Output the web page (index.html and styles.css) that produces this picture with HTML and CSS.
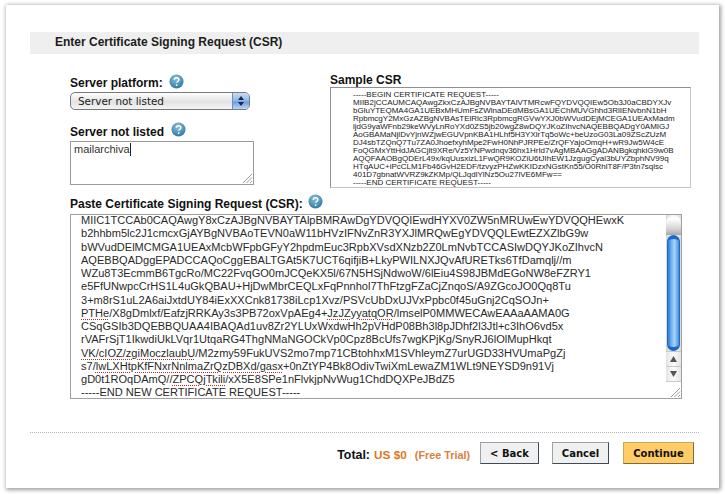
FILE: index.html
```html
<!DOCTYPE html>
<html lang="en">
<head>
<meta charset="utf-8">
<title>Enter Certificate Signing Request (CSR)</title>
<link rel="stylesheet" href="styles.css">
</head>
<body>
<svg class="sprite" width="0" height="0" aria-hidden="true">
  <defs>
    <radialGradient id="helpfill" cx="45%" cy="30%" r="75%">
      <stop offset="0" stop-color="#8fc0d8"/>
      <stop offset="0.6" stop-color="#4f94b8"/>
      <stop offset="1" stop-color="#2f7499"/>
    </radialGradient>
    <symbol id="help" viewBox="0 0 16 16">
      <circle cx="8" cy="8" r="7.5" fill="url(#helpfill)"/>
      <path d="M5.6 6.200C5.700 4.800 6.700 4 8.100 4c1.400 0 2.400.8 2.400 2 0 1-.6 1.500-1.300 2-.6.4-.9.7-.9 1.400" fill="none" stroke="#fff" stroke-width="1.600"/>
      <circle cx="8.200" cy="11.800" r="1" fill="#fff"/>
    </symbol>
  </defs>
</svg>
<main class="card">
  <h1 class="title">Enter Certificate Signing Request (CSR)</h1>
  <section class="columns">
    <div class="left">
      <label class="label label-platform"><span>Server platform:</span><svg class="help"><use href="#help"/></svg></label>
      <div class="select">
        <span class="select-value">Server not listed</span>
        <span class="select-arrows">
          <svg width="8" height="12" viewBox="0 0 8 12"><path d="M4 1 7 5H1zM4 11 1 7h6z" fill="#1a2a44"/></svg>
        </span>
      </div>
      <label class="label label-other"><span>Server not listed</span><svg class="help"><use href="#help"/></svg></label>
      <div class="input-small">mailarchiva<span class="caret"></span>
        <svg class="grip" width="11" height="11" viewBox="0 0 11 11"><path d="M1 10 10 1M4.500 10 10 4.500M8 10 10 8" stroke="#999" fill="none"/></svg>
      </div>
    </div>
    <div class="right">
      <h2 class="sample-title">Sample CSR</h2>
      <pre class="sample">-----BEGIN CERTIFICATE REQUEST-----
MIIB2jCCAUMCAQAwgZkxCzAJBgNVBAYTAlVTMRcwFQYDVQQIEw5Ob3J0aCBDYXJv
bGluYTEQMA4GA1UEBxMHUmFsZWlnaDEdMBsGA1UEChMUVGhhd3RlIENvbnN1bH
RpbmcgY2MxGzAZBgNVBAsTElRlc3RpbmcgRGVwYXJ0bWVudDEjMCEGA1UEAxMadm
ljdG9yaWFnb29keWVyLnRoYXd0ZS5jb20wgZ8wDQYJKoZIhvcNAQEBBQADgY0AMIGJ
AoGBAMaNjlDvYjnWZjwEGUVpnKBA1HLhf5H3YXlrTq5oWc+beUzoG03La09ZScZUzM
DJ4sbTZQnQ7Tu7ZA0JhoefxyhMpe2FwH0NhPJRPEe/ZrQFYajoOmqH+wR9Jw5W4cE
FoQGMxYttHdJAGCjlt9XRe/Vz5YNPwdnqv36hx1HrId7vAgMBAAGgADANBgkqhkiG9w0B
AQQFAAOBgQDErL49x/kqUusxizL1FwQR9KOZiU6tJIhEW1JzgugCyal3bUYZbphNV99q
HTqAUC+iPcCLM1Fb46GvH2EDF/tzvyzPHZwKKIDzxNGstKn55/O0RhlT8F/P3tn7sqlsc
401D7gbnatWVRZ9kZKMp/QLJqdlYlNz5Ou27lVE6MFw==
-----END CERTIFICATE REQUEST-----</pre>
    </div>
  </section>
  <label class="label label-paste"><span>Paste Certificate Signing Request (CSR):</span><svg class="help"><use href="#help"/></svg></label>
  <div class="paste">
    <pre class="paste-text">MIIC1TCCAb0CAQAwgY8xCzAJBgNVBAYTAlpBMRAwDgYDVQQIEwdHYXV0ZW5nMRUwEwYDVQQHEwxK
b2hhbm5lc2J1cmcxGjAYBgNVBAoTEVN0aW11bHVzIFNvZnR3YXJlMRQwEgYDVQQLEwtEZXZlbG9w
bWVudDElMCMGA1UEAxMcbWFpbGFyY2hpdmEuc3RpbXVsdXNzb2Z0LmNvbTCCASIwDQYJKoZIhvcN
AQEBBQADggEPADCCAQoCggEBALTGAt5K7UCT6qifjiB+LkyPWILNXJQvAfURETks6TfDamqlj//m
WZu8T3EcmmB6TgcRo/MC22FvqGO0mJCQeKX5l/67N5HSjNdwoW/6lEiu4S98JBMdEGoNW8eFZRY1
e5FfUNwpcCrHS1L4uGkQBAU+HjDwMbrCEQLxFqPnnhol7ThFtzgFZaCjZnqoS/A9ZGcoJO0Qq8Tu
3+m8rS1uL2A6aiJxtdUY84iExXXCnk81738iLcp1Xvz/PSVcUbDxUJVxPpbc0f45uGnj2CqSOJn+
<span class="sp">PTHe</span>/X8gDmlxf/EafzjRRKAy3s3PB72oxVpAEg4+<span class="sp">JzJZyyatqOR</span>/lmselP0MMWECAwEAAaAAMA0G
CSqGSIb3DQEBBQUAA4IBAQAd1uv8Zr2YLUxWxdwHh2pVHdP08Bh3l8pJDhf2l3Jtl+c3IhO6vd5x
rVAFrSjT1IkwdiUkLVqr1UtqaRG4ThgNMaNGOCkVp0Cpz8BcUfs7wgKPjKg/SnyRJ6lOlMupHkqt
<span class="sp">VK/cIOZ/zgiMoczlaubU</span>/M2zmy59FukUVS2mo7mp71CBtohhxM1SVhleymZ7urUGD33HVUmaPgZj
s7/<span class="sp">lwLXHtpKfFNxrNnlmaZrQzDBXd/gasx</span>+0nZtYP4Bk8OdivTwiXmLewaZM1WLt9NEYSD9n91Vj
gD0t1ROqDAmQ//<span class="sp">ZPCQjTkili</span>/xX5E8SPe1nFlvkjpNvWug1ChdDQXPeJBdZ5
-----END NEW CERTIFICATE REQUEST-----</pre>
    <div class="scrollbar">
      <div class="sb-cap"></div>
      <div class="sb-thumb"></div>
      <div class="sb-btn"><svg width="9" height="8" viewBox="0 0 9 8"><path d="M4.500 1 8 7H1z" fill="#555"/></svg></div>
      <div class="sb-btn"><svg width="9" height="8" viewBox="0 0 9 8"><path d="M4.500 7 1 1h7z" fill="#555"/></svg></div>
      <div class="sb-corner"><svg width="11" height="11" viewBox="0 0 11 11"><path d="M1 10 10 1M4.500 10 10 4.500M8 10 10 8" stroke="#999" fill="none"/></svg></div>
    </div>
  </div>
  <footer class="footer">
    <span class="total">Total:</span>
    <span class="price">US $0</span>
    <span class="trial">(Free Trial)</span>
    <button class="btn btn-back" type="button">&lt; Back</button>
    <button class="btn btn-cancel" type="button">Cancel</button>
    <button class="btn btn-primary" type="button">Continue</button>
  </footer>
</main>
</body>
</html>
```

FILE: styles.css
```css
* { box-sizing: border-box; }
html, body { margin: 0; padding: 0; background: #fff; }
body {
  width: 725px;
  height: 494px;
  overflow: hidden;
  padding: 5px 6px 6px;
  font-family: "Liberation Sans", Arial, sans-serif;
  color: #111;
}
.sprite { position: absolute; }
.card {
  width: 713px;
  height: 483px;
  background: #fff;
  box-shadow: 1px 1px 4px 1px rgba(0, 0, 0, 0.38);
  padding: 27px 20px 0 24px;
}
.title {
  margin: 0;
  height: 22px;
  background: #efefef;
  padding-left: 25px;
  font-size: 12px;
  line-height: 21px;
  font-weight: bold;
  color: #1c1c1c;
}
.columns {
  display: grid;
  grid-template-columns: 260px 361px;
  margin: 18px 0 0 40px;
  height: 116px;
}
.label {
  display: flex;
  align-items: flex-start;
  font-size: 12px;
  font-weight: bold;
  line-height: 14px;
  color: #111;
  white-space: nowrap;
}
.help {
  width: 15px;
  height: 15px;
  margin: -2px 0 0 6px;
  flex: none;
}
.label-platform { height: 20px; padding-top: 4px; }
.select {
  width: 180px;
  height: 18px;
  border: 1px solid #77797c;
  border-radius: 5px;
  background: linear-gradient(#fdfdfd, #e3e3e3 55%, #f4f4f4);
  display: flex;
  align-items: center;
  justify-content: space-between;
  overflow: hidden;
}
.select-value {
  padding-left: 7px;
  font-family: "Lucida Grande", "DejaVu Sans", sans-serif;
  font-size: 10.4px;
  color: #222;
}
.select-arrows {
  width: 17px;
  height: 16px;
  background: linear-gradient(#c8dcf5, #8db6ea 50%, #6a9de0 55%, #bcd6f5);
  border-left: 1px solid #6f8fbd;
  display: flex;
  align-items: center;
  justify-content: center;
}
.label-other { margin-top: 14px; height: 17px; padding-top: 1px; }
.label-other .help { margin-left: 7px; margin-top: -3px; }
.input-small {
  position: relative;
  width: 184px;
  height: 44px;
  border: 1px solid #9a9a9a;
  padding: 0 3px;
  font-size: 11px;
  line-height: 14px;
  color: #333;
  background: #fff;
}
.caret {
  display: inline-block;
  width: 1px;
  height: 13px;
  background: #222;
  vertical-align: -3px;
}
.grip { position: absolute; right: 0; bottom: 0; }
.sample-title {
  margin: 1px 0 0;
  font-size: 12px;
  line-height: 14px;
  height: 14px;
  font-weight: bold;
  color: #111;
}
.sample {
  margin: 0;
  width: 361px;
  height: 101px;
  border: 1px solid #c4c4c4;
  border-top-color: #8f8f8f;
  border-left-color: #8f8f8f;
  padding: 3px 0 0 22px;
  font-family: "Liberation Sans", Arial, sans-serif;
  font-size: 8px;
  line-height: 8px;
  color: #222;
  white-space: pre;
  overflow: hidden;
}
.label-paste { margin: 9px 0 0 40px; height: 17px; }
.label-paste .help { margin: -3px 0 0 5px; }
.paste {
  position: relative;
  margin-left: 40px;
  width: 612px;
  height: 185px;
  border: 1px solid #a0a0a0;
  background: #fff;
  overflow: hidden;
}
.paste-text {
  margin: -1px 0 0;
  padding-left: 10px;
  font-family: "Liberation Sans", Arial, sans-serif;
  font-size: 11.05px;
  line-height: 13.25px;
  color: #2a2a2a;
  white-space: pre;
}
.sp {
  text-decoration: underline dotted #b03030;
  text-underline-offset: 2px;
}
.scrollbar {
  position: absolute;
  top: 0;
  right: 0;
  width: 15px;
  height: 183px;
  background: linear-gradient(90deg, #d6d6d6, #f6f6f6 50%, #dcdcdc);
  display: flex;
  flex-direction: column;
}
.sb-cap {
  height: 20px;
  background: linear-gradient(#f3f3f3, #fff 20%, #d3d3d3 70%, #a8a8a8);
  border-radius: 8px 8px 0 0;
}
.sb-thumb {
  height: 116px;
  margin: 0 1px;
  border-radius: 7px;
  border: 1px solid #1f69c0;
  border-top: 4px solid #1a68c8;
  border-bottom: 4px solid #1a68c8;
  background: linear-gradient(90deg, #2a7ad8, #7ab8f2 35%, #a8d4fa 60%, #3f8fe0);
}
.sb-btn {
  height: 15px;
  display: flex;
  align-items: center;
  justify-content: center;
  background: linear-gradient(90deg, #e4e4e4, #fbfbfb 50%, #e4e4e4);
  border-top: 1px solid #c8c8c8;
}
.sb-corner {
  flex: 1;
  display: flex;
  align-items: flex-end;
  justify-content: flex-end;
  background: #fff;
  border-top: 1px solid #c8c8c8;
}
.footer {
  margin-top: 33px;
  height: 42px;
  border-top: 1px dotted #b5b5b5;
  display: flex;
  align-items: flex-start;
  padding: 9px 5px 0 0;
  justify-content: flex-end;
  font-weight: bold;
}
.total { font-size: 12.4px; line-height: 26px; color: #111; }
.price { font-size: 11.8px; line-height: 26px; color: #dd7722; margin-left: 4px; }
.trial { font-size: 10.8px; line-height: 26px; color: #d9803a; margin-left: 8px; margin-right: 10px; }
.btn {
  height: 22px;
  margin: 0;
  padding: 0;
  border: 1px solid #9aa3ad;
  border-right-color: #3c4a5c;
  border-bottom-color: #3c4a5c;
  background: #f0f0f0;
  font-family: "Lucida Grande", "DejaVu Sans", sans-serif;
  font-size: 10px;
  font-weight: bold;
  color: #111;
}
.btn-back { width: 59px; }
.btn-cancel { width: 57px; margin-left: 13px; }
.btn-primary {
  width: 71px;
  margin-left: 14px;
  background: #ffcc66;
  border-color: #c9a860 #7d6a40 #7d6a40 #c9a860;
}
```
